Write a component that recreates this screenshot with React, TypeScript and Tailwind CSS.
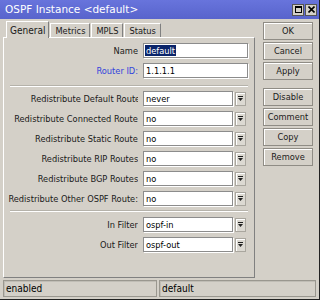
import React from "react";

const font = "font-['DejaVu_Sans_Condensed','DejaVu_Sans',sans-serif]";

function DropIcon() {
  return (
    <svg width="5" height="6" viewBox="0 0 5 6">
      <rect x="0" y="0" width="5" height="1" fill="#222" />
      <path d="M0 2 H5 L2.5 5 Z" fill="#222" />
    </svg>
  );
}

function Label({ text, clip = 0, blue = false }: { text: string; clip?: number; blue?: boolean }) {
  return (
    <div className="w-[134px] h-full flex items-center justify-end overflow-hidden">
      <span
        className={`whitespace-nowrap ${blue ? "text-[#3344dd]" : "text-[#1a1a1a]"}`}
        style={{ marginRight: -clip }}
      >
        {text}
      </span>
    </div>
  );
}

function TextRow({ label, value, blue, selected }: { label: string; value: string; blue?: boolean; selected?: boolean }) {
  return (
    <div className="flex h-[15px] items-center gap-[5px]">
      <Label text={label} blue={blue} />
      <div className="w-[105px] h-full bg-white border border-[#8c8c8c] shadow-[1px_1px_0_#fff] flex items-center px-[1px]">
        {selected ? (
          <span className="bg-[#0a246a] text-white leading-[11px] px-[1px]">{value}</span>
        ) : (
          <span className="px-[1px]">{value}</span>
        )}
      </div>
    </div>
  );
}

function SelectRow({ label, value, clip }: { label: string; value: string; clip?: number }) {
  return (
    <div className="flex h-[15px] items-center">
      <Label text={label} clip={clip} />
      <div className="ml-[5px] w-[90px] h-full bg-white border border-[#8c8c8c] shadow-[1px_1px_0_#fff] flex items-center px-[2px]">
        {value}
      </div>
      <div className="ml-[2px] w-[11px] h-[14px] border border-[#a9a69e] shadow-[inset_1px_1px_0_#fff] bg-[#dcd9d2] flex items-center justify-center">
        <DropIcon />
      </div>
    </div>
  );
}

function Separator() {
  return <div className="ml-[6px] w-[238px] h-[2px] border-t border-[#b5b2aa] border-b border-b-white" />;
}

function SideButton({ label }: { label: string }) {
  return (
    <div className="w-[50px] h-[18px] border border-[#8f8c85] shadow-[inset_1px_1px_0_#fff] flex items-center justify-center text-[#1a1a1a]">
      {label}
    </div>
  );
}

export default function App() {
  const tabs = ["General", "Metrics", "MPLS", "Status"];
  return (
    <div className={`w-[320px] h-[300px] bg-[#d4d0c8] flex flex-col border-r border-b border-[#222] text-[9.2px] ${font}`}>
      {/* Title bar */}
      <div className="h-[19px] bg-gradient-to-b from-[#6874dc] to-[#5864cc] flex items-center justify-between pl-[5px] pr-[2px]">
        <span className="text-white text-[10.5px] font-['DejaVu_Sans',sans-serif]">OSPF Instance &lt;default&gt;</span>
        <div className="flex gap-[1px]">
          <div className="w-[12px] h-[12px] bg-[#d4d0c8] border border-[#555] flex items-center justify-center">
            <div className="w-[7px] h-[7px] border border-black border-t-2" />
          </div>
          <div className="w-[12px] h-[12px] bg-[#d4d0c8] border border-[#555] flex items-center justify-center">
            <svg width="7" height="7" viewBox="0 0 7 7">
              <path d="M0.5 0.5 L6.5 6.5 M6.5 0.5 L0.5 6.5" stroke="#000" strokeWidth="1.6" />
            </svg>
          </div>
        </div>
      </div>

      {/* Body */}
      <div className="flex flex-1 pl-[3px]">
        <div className="w-[252px] flex flex-col pt-[3px]">
          <div className="flex h-[15px] items-end pl-[3px]">
            {tabs.map((t, i) =>
              i === 0 ? (
                <div
                  key={t}
                  className="h-[17px] -mb-[1px] z-10 px-[3px] bg-[#d4d0c8] border-t border-l border-white border-r border-r-[#808080] flex items-center text-[10px] text-[#1a1a1a]"
                >
                  {t}
                </div>
              ) : (
                <div
                  key={t}
                  className="h-[14px] ml-[1px] px-[4px] border-t border-l border-white border-r border-r-[#808080] flex items-center text-[#1a1a1a]"
                >
                  {t}
                </div>
              )
            )}
          </div>
          <div className="h-[241px] border-t border-l border-white border-r border-b border-r-[#808080] border-b-[#808080] flex flex-col pt-[5px]">
            <TextRow label="Name" value="default" selected />
            <div className="mt-[5px]">
              <TextRow label="Router ID:" value="1.1.1.1" blue />
            </div>
            <div className="mt-[7px]">
              <Separator />
            </div>
            <div className="mt-[4px] flex flex-col gap-[5px]">
              <SelectRow label="Redistribute Default Route:" value="never" clip={5} />
              <SelectRow label="Redistribute Connected Routes:" value="no" clip={7} />
              <SelectRow label="Redistribute Static Routes:" value="no" clip={7} />
              <SelectRow label="Redistribute RIP Routes:" value="no" clip={3} />
              <SelectRow label="Redistribute BGP Routes:" value="no" clip={3} />
              <SelectRow label="Redistribute Other OSPF Route:" value="no" clip={0} />
            </div>
            <div className="mt-[4px]">
              <Separator />
            </div>
            <div className="mt-[5px] flex flex-col gap-[5px]">
              <SelectRow label="In Filter" value="ospf-in" />
              <SelectRow label="Out Filter" value="ospf-out" />
            </div>
          </div>
        </div>

        <div className="ml-[8px] pt-[3px] flex flex-col">
          <div className="flex flex-col gap-[2px]">
            <SideButton label="OK" />
            <SideButton label="Cancel" />
            <SideButton label="Apply" />
          </div>
          <div className="mt-[8px] flex flex-col gap-[2px]">
            <SideButton label="Disable" />
            <SideButton label="Comment" />
            <SideButton label="Copy" />
            <SideButton label="Remove" />
          </div>
        </div>
      </div>

      {/* Status bar */}
      <div className="h-[19px] flex gap-[2px] px-[3px] pb-[2px]">
        <div className="w-[154px] h-full border border-[#9a978f] shadow-[inset_1px_1px_0_#c0bdb5] flex items-center px-[2px] text-[10px]">
          enabled
        </div>
        <div className="flex-1 h-full border border-[#9a978f] shadow-[inset_1px_1px_0_#c0bdb5] flex items-center px-[2px] text-[10px]">
          default
        </div>
      </div>
    </div>
  );
}
